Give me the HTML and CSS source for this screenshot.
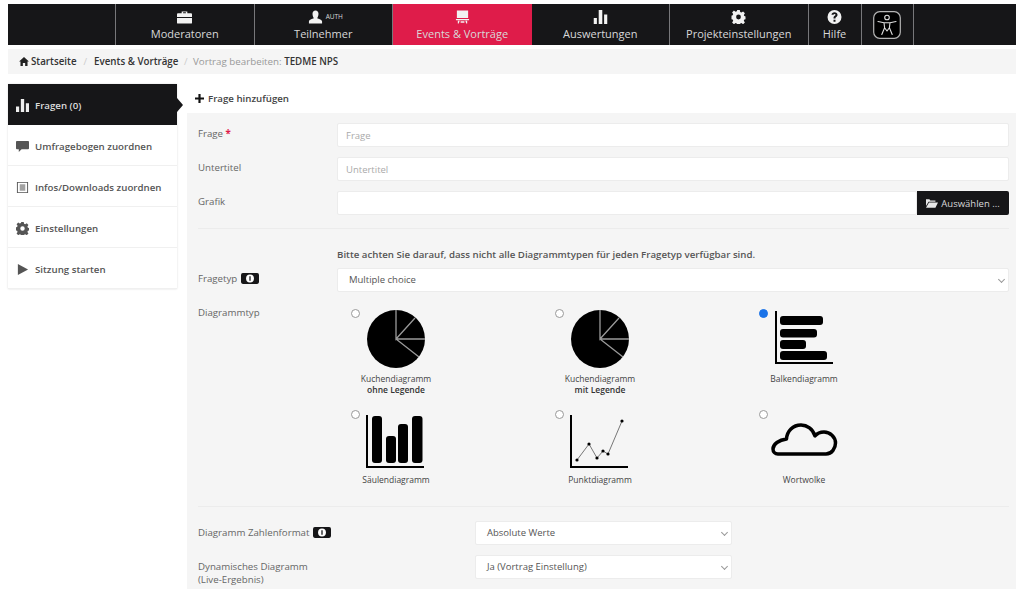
FILE: index.html
```html
<!DOCTYPE html>
<html lang="de">
<head>
    <meta charset="UTF-8">
    <meta name="viewport" content="width=device-width, initial-scale=1.0">
    <title>Vortrag bearbeiten</title>
    <link rel="stylesheet" href="styles.css">
</head>
<body>
    <svg class="icon-defs" width="0" height="0">
        <symbol id="i-bars" viewBox="0 0 14 14"><path d="M0 8h3.400v6H0zM5.200 0h3.600v14H5.200zM10.600 4.500H14V14h-3.400z"/></symbol>
        <symbol id="i-gear" viewBox="0 0 14 14"><path fill-rule="evenodd" d="M5.700 0h2.600l.4 2 1.200.5 1.700-1.100 1.800 1.800-1.100 1.700.5 1.200 2 .4v2.600l-2 .4-.5 1.200 1.100 1.700-1.800 1.800-1.700-1.100-1.200.5-.4 2H5.700l-.4-2-1.200-.5-1.700 1.100-1.800-1.800 1.100-1.700-.5-1.200-2-.4V5.700l2-.4.5-1.200-1.100-1.700 1.800-1.800 1.700 1.100 1.200-.5zM7 4.600a2.400 2.400 0 1 0 0 4.800 2.400 2.400 0 0 0 0-4.800z"/></symbol>
        <symbol id="i-info" viewBox="0 0 20 12"><rect width="20" height="12" rx="2"/><circle cx="10" cy="6" r="4.400" fill="#fff"/><rect x="9.300" y="3.500" width="1.400" height="5" fill="#161618"/></symbol>
    </svg>

    <nav class="topnav">
        <div class="nav-item nav-spacer"></div>
        <a class="nav-item nav-wide" href="#">
            <svg class="nav-icon" viewBox="0 0 16 14"><path d="M5 3V1h6v2h4a1 1 0 0 1 1 1v3H0V4a1 1 0 0 1 1-1zm1.500 0h3V2h-3zM0 8h16v5a1 1 0 0 1-1 1H1a1 1 0 0 1-1-1z"/></svg>
            <span>Moderatoren</span>
        </a>
        <a class="nav-item nav-wide" href="#">
            <span class="nav-top">
                <svg class="nav-icon" viewBox="0 0 16 14"><path d="M8 0c2 0 3.200 1.500 3.200 3.600S10.200 7.500 9.800 8.300c1.500.8 5.200 1.500 5.200 3.500V14H1v-2.200c0-2 3.700-2.700 5.200-3.500C5.800 7.500 4.800 5.700 4.800 3.600S6 0 8 0z"/></svg>
                <small class="nav-tag">AUTH</small>
            </span>
            <span>Teilnehmer</span>
        </a>
        <a class="nav-item nav-wide nav-active" href="#">
            <svg class="nav-icon" viewBox="0 0 16 14"><path d="M2 0h12v8H2zM1 9h14v1.500H1zM3 11h2l-1 3H3zM11 11h2v3h-1zM6 11.500h4V13H6z"/></svg>
            <span>Events &amp; Vorträge</span>
        </a>
        <a class="nav-item nav-wide" href="#">
            <svg class="nav-icon" viewBox="0 0 14 14"><use href="#i-bars"/></svg>
            <span>Auswertungen</span>
        </a>
        <a class="nav-item nav-wide" href="#">
            <svg class="nav-icon" viewBox="0 0 14 14"><use href="#i-gear"/></svg>
            <span>Projekteinstellungen</span>
        </a>
        <a class="nav-item nav-help" href="#">
            <svg class="nav-icon" viewBox="0 0 14 14"><path fill-rule="evenodd" d="M7 0a7 7 0 1 1 0 14A7 7 0 0 1 7 0zM6 9.800v2h2v-2zM7 2.300c-1.700 0-2.900 1-3 2.500h2c.1-.6.400-.9 1-.9s1 .3 1 .8c0 .4-.2.700-.8 1.100C6.300 6.400 6 7 6 8.500h2c0-.9.200-1.200.8-1.600C9.600 6.300 10 5.700 10 4.700c0-1.500-1.200-2.400-3-2.400z"/></svg>
            <span>Hilfe</span>
        </a>
        <a class="nav-item nav-access" href="#">
            <svg class="access-icon" viewBox="0 0 28 28">
                <rect x="0.700" y="0.700" width="26.600" height="26.600" rx="6" fill="#000" stroke="#b5b5b5" stroke-width="1.200"/>
                <g fill="none" stroke="#ddd" stroke-width="1.100" stroke-linecap="round" stroke-linejoin="round">
                    <circle cx="14" cy="6.500" r="2.300"/>
                    <path d="M5 10.500l6 1.200h6l6-1.200M11 11.700l.6 5-2.800 6.800M17 11.700l-.6 5 2.800 6.800M11.600 16.700L14 20l2.400-3.300"/>
                </g>
            </svg>
        </a>
    </nav>

    <div class="breadcrumb">
        <svg class="crumb-icon" viewBox="0 0 12 11"><path d="M6 0l6 5.500h-1.700V11H7.400V7.400H4.600V11H1.700V5.500H0z"/></svg>
        <a href="#">Startseite</a>
        <span class="crumb-sep">/</span>
        <a href="#">Events &amp; Vorträge</a>
        <span class="crumb-sep crumb-sep-last">/</span>
        <span class="crumb-current">Vortrag bearbeiten: <b>TEDME NPS</b></span>
    </div>

    <div class="layout">
        <aside class="sidebar">
            <a class="side-item side-active" href="#">
                <svg class="side-icon" viewBox="0 0 14 14"><use href="#i-bars"/></svg>
                Fragen (0)
            </a>
            <a class="side-item" href="#">
                <svg class="side-icon" viewBox="0 0 14 14"><path d="M1 1h12a1 1 0 0 1 1 1v7a1 1 0 0 1-1 1H6l-3 3v-3H1a1 1 0 0 1-1-1V2a1 1 0 0 1 1-1z"/></svg>
                Umfragebogen zuordnen
            </a>
            <a class="side-item" href="#">
                <svg class="side-icon" viewBox="0 0 14 14"><path fill-rule="evenodd" d="M1 1h12v12H1zm1 1v10h10V2z"/><path d="M4 3.500h6v7H4z" opacity=".55"/></svg>
                Infos/Downloads zuordnen
            </a>
            <a class="side-item" href="#">
                <svg class="side-icon" viewBox="0 0 14 14"><use href="#i-gear"/></svg>
                Einstellungen
            </a>
            <a class="side-item" href="#">
                <svg class="side-icon" viewBox="0 0 14 14"><path d="M2 1l11 6-11 6z"/></svg>
                Sitzung starten
            </a>
        </aside>

        <main class="panel">
            <div class="panel-head">
                <svg class="plus-icon" viewBox="0 0 10 10"><path d="M3.800 0h2.400v3.800H10v2.400H6.200V10H3.800V6.200H0V3.800h3.800z"/></svg>
                Frage hinzufügen
            </div>

            <form class="panel-body">
                <div class="form-row">
                    <label>Frage <em>*</em></label>
                    <input type="text" placeholder="Frage">
                </div>
                <div class="form-row">
                    <label>Untertitel</label>
                    <input type="text" placeholder="Untertitel">
                </div>
                <div class="form-row">
                    <label>Grafik</label>
                    <div class="file-group">
                        <input type="text">
                        <button type="button">
                            <svg viewBox="0 0 14 11"><path d="M0 1h4l1 1.500h6V4H3L0 9zM3.500 5H14l-3 6H0z"/></svg>
                            Auswählen ...
                        </button>
                    </div>
                </div>

                <hr class="rule-one">

                <p class="hint">Bitte achten Sie darauf, dass nicht alle Diagrammtypen für jeden Fragetyp verfügbar sind.</p>
                <div class="form-row">
                    <label>Fragetyp <svg class="info-badge" viewBox="0 0 20 12"><use href="#i-info"/></svg></label>
                    <div class="select-box">Multiple choice</div>
                </div>

                <div class="chart-row">
                    <label>Diagrammtyp</label>
                    <div class="chart-grid">
                        <div class="chart-option">
                            <span class="radio"></span>
                            <svg class="chart-icon" viewBox="0 0 60 60"><circle cx="30" cy="30" r="29"/><path d="M30 1v29l19-21M30 30h29M30 30l23 18" fill="none" stroke="#9a9a9a" stroke-width="1.300"/></svg>
                            <span class="chart-name">Kuchendiagramm<b>ohne Legende</b></span>
                        </div>
                        <div class="chart-option">
                            <span class="radio"></span>
                            <svg class="chart-icon" viewBox="0 0 60 60"><circle cx="30" cy="30" r="29"/><path d="M30 1v29l19-21M30 30h29M30 30l23 18" fill="none" stroke="#9a9a9a" stroke-width="1.300"/></svg>
                            <span class="chart-name">Kuchendiagramm<b>mit Legende</b></span>
                        </div>
                        <div class="chart-option">
                            <span class="radio radio-on"></span>
                            <svg class="chart-icon" viewBox="0 0 60 60"><path d="M1 2h2v51h56v2H1z"/><rect x="6" y="7" width="43" height="9" rx="3"/><rect x="6" y="20" width="37" height="8.500" rx="3"/><rect x="6" y="31" width="26" height="9" rx="3"/><rect x="6" y="42" width="47" height="9" rx="3"/></svg>
                            <span class="chart-name">Balkendiagramm</span>
                        </div>
                        <div class="chart-option">
                            <span class="radio"></span>
                            <svg class="chart-icon" viewBox="0 0 60 60"><path d="M0 5h2v51h56v2H0z"/><rect x="6" y="6" width="10" height="47" rx="3"/><rect x="20" y="26" width="10" height="27" rx="3"/><rect x="32" y="14" width="10" height="39" rx="3"/><rect x="46" y="6" width="10.500" height="47" rx="3"/></svg>
                            <span class="chart-name">Säulendiagramm</span>
                        </div>
                        <div class="chart-option">
                            <span class="radio"></span>
                            <svg class="chart-icon" viewBox="0 0 60 60"><path d="M0 5h2v51h56v2H0z"/><path d="M7 50l12-16 8 14 6-7 5 3 14-33" fill="none" stroke="#555" stroke-width=".8"/><circle cx="7" cy="50" r="1.600"/><circle cx="19" cy="34" r="1.600"/><circle cx="27" cy="48" r="1.600"/><circle cx="33" cy="41" r="1.600"/><circle cx="38" cy="44" r="1.600"/><circle cx="52" cy="11" r="1.600"/></svg>
                            <span class="chart-name">Punktdiagramm</span>
                        </div>
                        <div class="chart-option">
                            <span class="radio"></span>
                            <svg class="chart-icon chart-icon-wide" viewBox="0 0 68 60"><path d="M8 44H56C62 44 65.500 38 65.500 33C65.500 27 60 22 54 22C50 22 47 23.500 45 26C43 19 37 15 31 15C23 15 17 21 16.500 29C9 30 3 34 3 39C3 42 5 44 8 44z" fill="none" stroke="#000" stroke-width="3.500" stroke-linejoin="round"/></svg>
                            <span class="chart-name">Wortwolke</span>
                        </div>
                    </div>
                </div>

                <hr class="rule-two">

                <div class="form-row short-row">
                    <label>Diagramm Zahlenformat <svg class="info-badge" viewBox="0 0 20 12"><use href="#i-info"/></svg></label>
                    <div class="select-box">Absolute Werte</div>
                </div>
                <div class="form-row short-row">
                    <label>Dynamisches Diagramm<br>(Live-Ergebnis)</label>
                    <div class="select-box">Ja (Vortrag Einstellung)</div>
                </div>
            </form>
        </main>
    </div>
</body>
</html>
```

FILE: styles.css
```css
* {
    box-sizing: border-box;
}

html, body {
    height: 589px;
    overflow: hidden;
}

body {
    margin: 0;
    padding: 4px 8px 0;
    background-color: #ffffff;
    color: #555;
    font-family: 'Open Sans', sans-serif;
    font-size: 10px;
}

a {
    color: inherit;
    text-decoration: none;
}

.icon-defs {
    position: absolute;
}

/* top navigation */
.topnav {
    display: flex;
    height: 41px;
    background-color: #161618;
    color: #d8d8d8;
}

.nav-item {
    display: flex;
    flex-direction: column;
    align-items: center;
    gap: 2px;
    padding-top: 6px;
    border-right: 1px solid #77777a;
    font-size: 11px;
    line-height: 15px;
}

.nav-spacer {
    width: 108px;
}

.nav-wide {
    width: 138.500px;
}

.nav-active {
    border-right: 0;
    background-color: #df1c4a;
}

.nav-help {
    width: 53px;
}

.nav-access {
    width: 52px;
    padding-top: 7px;
}

.nav-top {
    display: flex;
    align-items: center;
    gap: 3px;
    margin-left: 4px;
}

.nav-tag {
    margin-top: -1px;
    font-size: 6.500px;
    line-height: 9px;
}

.nav-icon {
    flex: none;
    width: 15px;
    height: 14px;
    fill: #f2f2f2;
}

.access-icon {
    width: 28px;
    height: 28px;
}

/* breadcrumb */
.breadcrumb {
    display: flex;
    align-items: center;
    height: 25px;
    margin-top: 4px;
    padding-left: 11px;
    background-color: #f5f5f5;
    color: #333;
    font-size: 9.750px;
    font-weight: 600;
}

.crumb-icon {
    width: 10px;
    height: 9px;
    margin-right: 2px;
    fill: #222;
}

.crumb-sep {
    margin: 0 7px;
    color: #ccc;
    font-weight: 400;
}

.crumb-sep-last {
    margin: 0 5.500px;
}

.crumb-current {
    color: #999;
    font-weight: 400;
}

.crumb-current b {
    color: #333;
    font-weight: 600;
}

/* page columns */
.layout {
    display: flex;
    align-items: flex-start;
    gap: 10px;
    margin-top: 10px;
}

.sidebar {
    flex: none;
    width: 169px;
    background-color: #fff;
    box-shadow: 0 0 2px #ddd;
}

.side-item {
    position: relative;
    display: flex;
    align-items: center;
    height: 41px;
    padding: 2px 0 0 8px;
    border-bottom: 1px solid #f0f0f0;
    color: #555;
    font-size: 9.700px;
    font-weight: 600;
}

.side-icon {
    flex: none;
    width: 13px;
    height: 13px;
    margin-right: 6px;
    fill: #555;
}

.side-active {
    padding-top: 1px;
    border-bottom: 0;
    background-color: #161618;
    color: #ddd;
}

.side-active::after {
    content: "";
    position: absolute;
    right: -6px;
    top: 14px;
    border-left: 6px solid #161618;
    border-top: 7px solid transparent;
    border-bottom: 7px solid transparent;
}

.side-active .side-icon {
    fill: #eee;
}

.panel {
    flex: 1;
    height: 505px;
    background-color: #f5f5f5;
}

.panel-head {
    display: flex;
    align-items: center;
    height: 29px;
    padding-left: 8px;
    background-color: #fff;
    color: #444;
    font-size: 9.700px;
    font-weight: 600;
}

.plus-icon {
    width: 9px;
    height: 9px;
    margin-right: 4px;
    fill: #111;
}

.panel-body {
    padding: 10px 7px 0 11px;
}

.form-row {
    display: flex;
    height: 24px;
    margin-bottom: 10px;
}

.form-row label,
.chart-row label {
    flex: none;
    width: 139px;
    padding-top: 4px;
    line-height: 13px;
    color: #666;
    font-size: 9.700px;
}

.form-row em {
    color: #df1c4a;
    font-style: normal;
    font-weight: 700;
}

input {
    flex: 1;
    min-width: 0;
    height: 24px;
    padding: 0 8px;
    border: 1px solid #ececec;
    border-radius: 2px;
    background-color: #fff;
    font-family: inherit;
    font-size: 9.500px;
}

input::placeholder {
    color: #aaa;
}

.file-group {
    display: flex;
    flex: 1;
}

button {
    display: flex;
    flex: none;
    align-items: center;
    justify-content: center;
    gap: 3px;
    width: 92px;
    height: 24px;
    border: 0;
    border-radius: 0 2px 2px 0;
    background-color: #161618;
    color: #d8d8d8;
    font-family: inherit;
    font-size: 9.500px;
}

button svg {
    width: 12px;
    height: 10px;
    fill: #e8e8e8;
}

hr {
    height: 1px;
    margin: 0;
    border: 0;
    background-color: #ececec;
}

.rule-one {
    margin-top: 13px;
}

.hint {
    margin: 19px 0 6px 139px;
    color: #555;
    font-size: 9.700px;
    font-weight: 600;
    line-height: 14px;
}

.info-badge {
    width: 18px;
    height: 11px;
    margin-left: 1px;
    vertical-align: -2px;
    fill: #161618;
}

.select-box {
    position: relative;
    flex: 1;
    height: 24px;
    padding: 0 11px;
    border: 1px solid #ececec;
    border-radius: 2px;
    background-color: #fff;
    color: #555;
    font-size: 9.500px;
    line-height: 22px;
}

.select-box::after {
    content: "";
    position: absolute;
    right: 4px;
    top: 8px;
    width: 4px;
    height: 4px;
    border-right: 1px solid #999;
    border-bottom: 1px solid #999;
    transform: rotate(45deg);
}

.chart-row {
    display: flex;
    margin-top: -1px;
}

.chart-row label {
    padding-top: 5px;
}

.chart-grid {
    display: grid;
    grid-template-columns: repeat(3, 204px);
    grid-template-rows: 101px 91px;
}

.chart-option {
    position: relative;
    display: flex;
    flex-direction: column;
    align-items: center;
    width: 118px;
    padding-top: 8px;
    color: #444;
    font-size: 8.500px;
    line-height: 11px;
    text-align: center;
}

.chart-icon {
    width: 60px;
    height: 60px;
    flex: none;
}

.chart-icon-wide {
    width: 68px;
}

.chart-name {
    margin-top: 4px;
}

.chart-name b {
    display: block;
    color: #333;
    font-weight: 600;
}

.radio {
    position: absolute;
    left: 14px;
    top: 8px;
    width: 9px;
    height: 9px;
    border: 1px solid #999;
    border-radius: 50%;
    background-color: #fff;
}

.radio-on {
    border-color: #1a73e8;
    background-color: #1a73e8;
}

.rule-two {
    margin-top: 13px;
}

.short-row {
    margin-top: 14px;
    margin-bottom: -4px;
}

.short-row .select-box {
    flex: none;
    width: 257px;
    margin-left: 138px;
}

.short-row label {
    width: 139px;
    padding-top: 5px;
    white-space: nowrap;
}
```
